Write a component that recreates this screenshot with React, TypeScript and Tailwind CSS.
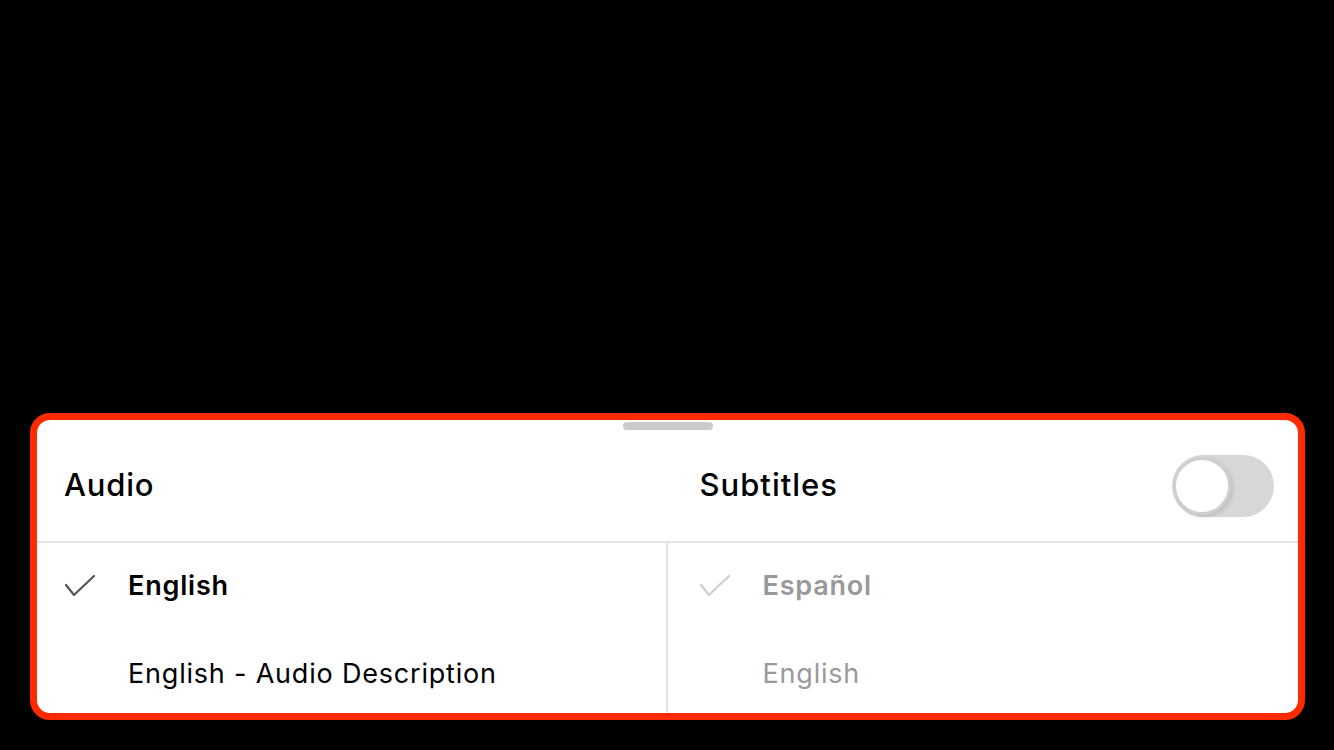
import React from "react";

function Check({ color }: { color: string }) {
  return (
    <svg width="30" height="24" viewBox="0 0 30 24" className="shrink-0">
      <polyline points="1,11 9,21 29,2" fill="none" stroke={color} strokeWidth="2.2" strokeLinecap="round" strokeLinejoin="round" />
    </svg>
  );
}

export default function App() {
  return (
    <div className="w-full h-[750px] bg-black flex flex-col justify-end pl-[30px] pr-[29px] pb-[30px]" style={{ fontFamily: "Inter, 'Noto Sans', sans-serif" }}>
      <div className="relative h-[307px] bg-white border-[7px] border-[#ff2a00] rounded-[20px] overflow-hidden flex flex-col">
        <div className="absolute left-1/2 top-[2px] -translate-x-1/2 w-[90px] h-[8px] rounded-full bg-[#cccccc]" />
        <div className="grid grid-cols-2 h-[123px] pt-[10px] border-b-2 border-[#e3e3e3] shrink-0">
          <div className="flex items-center pl-[27px]">
            <span className="text-[31px] font-medium text-black tracking-[0.8px]">Audio</span>
          </div>
          <div className="flex items-center justify-between pl-[32px] pr-[24px]">
            <span className="text-[31px] font-medium text-black tracking-[1px]">Subtitles</span>
            <div className="relative w-[102px] h-[62px] rounded-full bg-[#d7d7d9]">
              <div className="absolute left-[1px] top-[2px] w-[58px] h-[58px] rounded-full bg-white border-[3px] border-[#cfcfcf] shadow-[2px_2px_4px_rgba(0,0,0,0.12)]" />
            </div>
          </div>
        </div>
        <div className="grid grid-cols-2 flex-1">
          <div className="flex flex-col pt-[23px] gap-[48px] pl-[28px] border-r-2 border-[#e3e3e3]">
            <div className="flex items-center h-[40px]">
              <div className="w-[63px] flex items-center"><Check color="#555555" /></div>
              <span className="text-[27px] font-semibold text-black tracking-[0.8px]">English</span>
            </div>
            <div className="flex items-center h-[40px]">
              <div className="w-[63px]" />
              <span className="text-[27px] text-black tracking-[0.8px]">English - Audio Description</span>
            </div>
          </div>
          <div className="flex flex-col pt-[23px] gap-[48px] pl-[32px]">
            <div className="flex items-center h-[40px]">
              <div className="w-[63px] flex items-center"><Check color="#cfcfcf" /></div>
              <span className="text-[27px] font-semibold text-[#999999] tracking-[0.8px]">Español</span>
            </div>
            <div className="flex items-center h-[40px]">
              <div className="w-[63px]" />
              <span className="text-[27px] text-[#9a9a9a] tracking-[0.8px]">English</span>
            </div>
          </div>
        </div>
      </div>
    </div>
  );
}
